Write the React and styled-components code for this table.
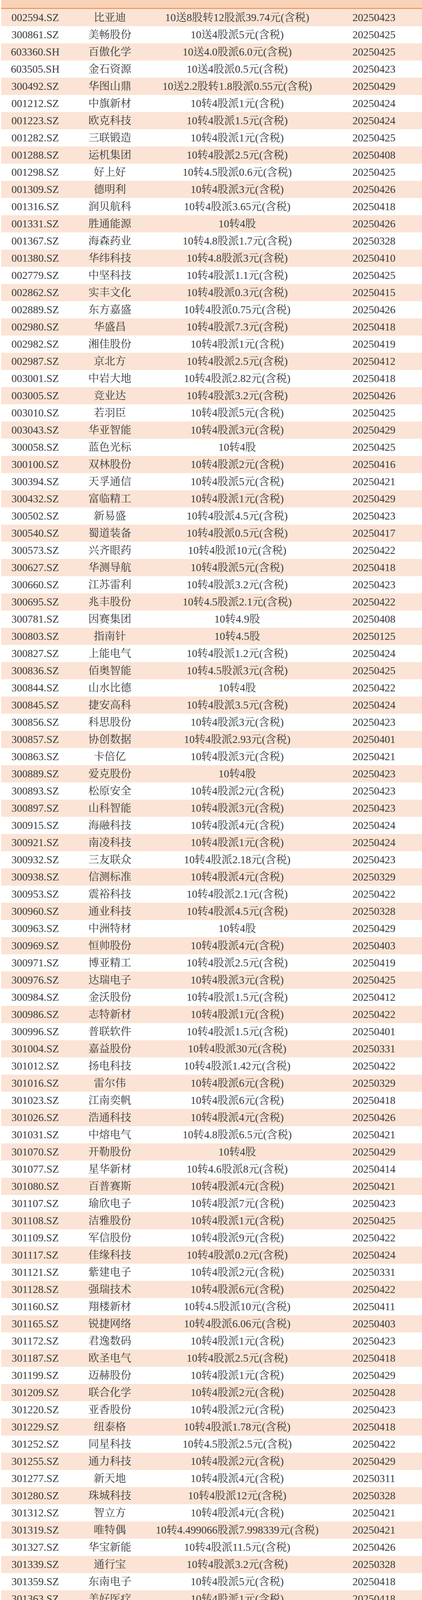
import React from 'react';
import styled, { createGlobalStyle } from 'styled-components';

const GlobalStyle = createGlobalStyle`
  html, body {
    margin: 0;
    padding: 0;
    background: #ffffff;
  }
  body {
    font-family: "Liberation Serif", "Noto Serif CJK SC", "Noto Sans CJK SC", serif;
    color: #3a3a3a;
  }
`;

// code|name|plan|date
const ROWS = `002594.SZ|比亚迪|10送8股转12股派39.74元(含税)|20250423
300861.SZ|美畅股份|10送4股派5元(含税)|20250425
603360.SH|百傲化学|10送4.0股派6.0元(含税)|20250425
603505.SH|金石资源|10送4股派0.5元(含税)|20250423
300492.SZ|华图山鼎|10送2.2股转1.8股派0.55元(含税)|20250429
001212.SZ|中旗新材|10转4股派1元(含税)|20250424
001223.SZ|欧克科技|10转4股派1.5元(含税)|20250424
001282.SZ|三联锻造|10转4股派1元(含税)|20250425
001288.SZ|运机集团|10转4股派2.5元(含税)|20250408
001298.SZ|好上好|10转4.5股派0.6元(含税)|20250425
001309.SZ|德明利|10转4股派3元(含税)|20250426
001316.SZ|润贝航科|10转4股派3.65元(含税)|20250418
001331.SZ|胜通能源|10转4股|20250426
001367.SZ|海森药业|10转4.8股派1.7元(含税)|20250328
001380.SZ|华纬科技|10转4.8股派3元(含税)|20250410
002779.SZ|中坚科技|10转4股派1.1元(含税)|20250425
002862.SZ|实丰文化|10转4股派0.3元(含税)|20250415
002889.SZ|东方嘉盛|10转4股派0.75元(含税)|20250426
002980.SZ|华盛昌|10转4股派7.3元(含税)|20250418
002982.SZ|湘佳股份|10转4股派1元(含税)|20250419
002987.SZ|京北方|10转4股派2.5元(含税)|20250412
003001.SZ|中岩大地|10转4股派2.82元(含税)|20250418
003005.SZ|竞业达|10转4股派3.2元(含税)|20250426
003010.SZ|若羽臣|10转4股派5元(含税)|20250425
003043.SZ|华亚智能|10转4股派3元(含税)|20250429
300058.SZ|蓝色光标|10转4股|20250425
300100.SZ|双林股份|10转4股派2元(含税)|20250416
300394.SZ|天孚通信|10转4股派5元(含税)|20250421
300432.SZ|富临精工|10转4股派1元(含税)|20250429
300502.SZ|新易盛|10转4股派4.5元(含税)|20250423
300540.SZ|蜀道装备|10转4股派0.5元(含税)|20250417
300573.SZ|兴齐眼药|10转4股派10元(含税)|20250422
300627.SZ|华测导航|10转4股派5元(含税)|20250418
300660.SZ|江苏雷利|10转4股派3.2元(含税)|20250423
300695.SZ|兆丰股份|10转4.5股派2.1元(含税)|20250422
300781.SZ|因赛集团|10转4.9股|20250408
300803.SZ|指南针|10转4.5股|20250125
300827.SZ|上能电气|10转4股派1.2元(含税)|20250424
300836.SZ|佰奥智能|10转4.5股派3元(含税)|20250425
300844.SZ|山水比德|10转4股|20250422
300845.SZ|捷安高科|10转4股派3.5元(含税)|20250424
300856.SZ|科思股份|10转4股派3元(含税)|20250423
300857.SZ|协创数据|10转4股派2.93元(含税)|20250401
300863.SZ|卡倍亿|10转4股派3元(含税)|20250421
300889.SZ|爱克股份|10转4股|20250423
300893.SZ|松原安全|10转4股派2元(含税)|20250423
300897.SZ|山科智能|10转4股派3元(含税)|20250423
300915.SZ|海融科技|10转4股派4元(含税)|20250424
300921.SZ|南凌科技|10转4股派1元(含税)|20250424
300932.SZ|三友联众|10转4股派2.18元(含税)|20250423
300938.SZ|信测标准|10转4股派4元(含税)|20250329
300953.SZ|震裕科技|10转4股派2.1元(含税)|20250422
300960.SZ|通业科技|10转4股派4.5元(含税)|20250328
300963.SZ|中洲特材|10转4股|20250429
300969.SZ|恒帅股份|10转4股派4元(含税)|20250403
300971.SZ|博亚精工|10转4股派2.5元(含税)|20250419
300976.SZ|达瑞电子|10转4股派3元(含税)|20250425
300984.SZ|金沃股份|10转4股派1.5元(含税)|20250412
300986.SZ|志特新材|10转4股派1元(含税)|20250422
300996.SZ|普联软件|10转4股派1.5元(含税)|20250401
301004.SZ|嘉益股份|10转4股派30元(含税)|20250331
301012.SZ|扬电科技|10转4股派1.42元(含税)|20250422
301016.SZ|雷尔伟|10转4股派6元(含税)|20250329
301023.SZ|江南奕帆|10转4股派6元(含税)|20250418
301026.SZ|浩通科技|10转4股派4元(含税)|20250426
301031.SZ|中熔电气|10转4.8股派6.5元(含税)|20250421
301070.SZ|开勒股份|10转4股|20250429
301077.SZ|星华新材|10转4.6股派8元(含税)|20250414
301080.SZ|百普赛斯|10转4股派4元(含税)|20250421
301107.SZ|瑜欣电子|10转4股派7元(含税)|20250423
301108.SZ|洁雅股份|10转4股派1元(含税)|20250425
301109.SZ|军信股份|10转4股派9元(含税)|20250422
301117.SZ|佳缘科技|10转4股派0.2元(含税)|20250424
301121.SZ|紫建电子|10转4股派2元(含税)|20250331
301128.SZ|强瑞技术|10转4股派6元(含税)|20250422
301160.SZ|翔楼新材|10转4.5股派10元(含税)|20250411
301165.SZ|锐捷网络|10转4股派6.06元(含税)|20250403
301172.SZ|君逸数码|10转4股派1元(含税)|20250423
301187.SZ|欧圣电气|10转4股派2.5元(含税)|20250418
301199.SZ|迈赫股份|10转4股派1元(含税)|20250429
301209.SZ|联合化学|10转4股派2元(含税)|20250428
301220.SZ|亚香股份|10转4股派2元(含税)|20250423
301229.SZ|纽泰格|10转4股派1.78元(含税)|20250418
301252.SZ|同星科技|10转4.5股派2.5元(含税)|20250422
301255.SZ|通力科技|10转4股派2元(含税)|20250429
301277.SZ|新天地|10转4股派4元(含税)|20250311
301280.SZ|珠城科技|10转4股派12元(含税)|20250328
301312.SZ|智立方|10转4股派4元(含税)|20250421
301319.SZ|唯特偶|10转4.499066股派7.998339元(含税)|20250421
301327.SZ|华宝新能|10转4股派11.5元(含税)|20250426
301339.SZ|通行宝|10转4股派3.2元(含税)|20250328
301359.SZ|东南电子|10转4股派5元(含税)|20250418
301363.SZ|美好医疗|10转4股派1元(含税)|20250418
301366.SZ|一博科技|10转4股派4元(含税)|20250428
301379.SZ|天山电子|10转4股派4元(含税)|20250422
301380.SZ|挖金客|10转4.5股派3.5元(含税)|20250428
301396.SZ|宏景科技|10转4股派0.5元(含税)|20250424
301398.SZ|星源卓镁|10转4股派3.75元(含税)|20250403
301399.SZ|英特科技|10转4.5股派3.00元(含税)|20250429
301479.SZ|弘景光电|10转4股派15元(含税)|20250428
301489.SZ|思泉新材|10转4股派2.5元(含税)|20250416
301500.SZ|飞南资源|10转4股派1.3元(含税)|20250412
301501.SZ|恒鑫生活|10转4.5股派5元(含税)|20250425
301517.SZ|陕西华达|10转4股派0.56元(含税)|20250429
301538.SZ|骏鼎达|10转4股派6元(含税)|20250422
301550.SZ|斯菱股份|10转4.5股派4元(含税)|20250424
301552.SZ|科力装备|10转4股派10元(含税)|20250424
301580.SZ|爱迪特|10转4股派6.5元(含税)|20250429
301596.SZ|瑞迪智驱|10转4股派5.6元(含税)|20250419
301600.SZ|慧翰股份|10转4.9股派25元(含税)|20250421
301607.SZ|富特科技|10转4股派0.18元(含税)|20250424
301613.SZ|新铝时代|10转5股派10元(含税)|20250415
301618.SZ|长联科技|10转4股派3.3元(含税)|20250429
301631.SZ|壹连科技|10转4股派12元(含税)|20250419
600885.SH|宏发股份|10转4.0股派5.150元(含税)|20250329
603037.SH|凯众股份|10转4.0股派3.50元(含税)|20250429
603050.SH|科林电气|10转4.8股派2元(含税)|20250225
603051.SH|鹿山新材|10转4股派4元(含税)|20250428
603052.SH|可川科技|10转4股派2.5元(含税)|20250430
603067.SH|振华股份|10转4股派1.9元(含税)|20250428
603095.SH|越剑智能|10转4股派8元(含税)|20250412
603125.SH|常青科技|10转4.50股派1.50元(含税)|20250412
603195.SH|公牛集团|10转4.0股派24.0元(含税)|20250425
603269.SH|海鸥股份|10转4股派3元(含税)|20250429
603277.SH|银都股份|10转4.50股派5.0元(含税)|20250429
603283.SH|赛腾股份|10转4股派5.6元(含税)|20250430
603319.SH|美湖股份|10转4股派2.1元(含税)|20250426
603499.SH|翔港科技|10转4股派2.0元(含税)|20250426
603535.SH|嘉诚国际|10转4.8股派0.9元(含税)|20250220
603737.SH|三棵树|10转4股派3.2元(含税)|20250426
603871.SH|嘉友国际|10转4股派4元(含税)|20250425
605009.SH|豪悦护理|10转4股派8.5元(含税)|20250415
605117.SH|德业股份|10转4.0股派26.0元(含税)|20250430
605128.SH|上海沿浦|10转4.9股派3.88元(含税)|20250328
605369.SH|拱东医疗|10转4股派4元(含税)|20250422
605378.SH|野马电池|10转4股派5元(含税)|20250428
605488.SH|福莱新材|10转4股派1.5元(含税)|20250329
688018.SH|乐鑫科技|10转4股派6元(含税)|20250322
688059.SH|华锐精密|10转4股派6元(含税)|20250429
688076.SH|诺泰生物|10转4股派8元(含税)|20250423
688083.SH|中望软件|10转4股派5元(含税)|20250422
688096.SH|京源环保|10转4股派1.5元(含税)|20250426
688117.SH|圣诺生物|10转4股派1.4元(含税)|20250425
688120.SH|华海清科|10转4.9股派5.5元(含税)|20250429
688157.SH|松井股份|10转4股派2.33元(含税)|20250429
688169.SH|石头科技|10转4股派10.70元(含税)|20250404
688188.SH|柏楚电子|10转4股派21.6元(含税)|20250403
688191.SH|智洋创新|10转4.9股派5元(含税)|20250426
688208.SH|道通科技|10转4.9股派5元(含税)|20250329
688244.SH|永信至诚|10转4.8股派0.5元(含税)|20250429
688257.SH|新锐股份|10转4股派3元(含税)|20250418
688281.SH|华秦科技|10转4股派5.2元(含税)|20250425
688301.SH|奕瑞科技|10转4股派10元(含税)|20250426
688318.SH|财富趋势|10转4股派5元(含税)|20250329
688360.SH|德马科技|10转4股派1.5元(含税)|20250429
688399.SH|硕世生物|10转4.8股|20250419
688419.SH|耐科装备|10转4股派4元(含税)|20250412
688522.SH|纳睿雷达|10转4股派1元(含税)|20250419
688531.SH|日联科技|10转4.5股派6元(含税)|20250426
688556.SH|高测股份|10转4股派1.8元(含税)|20250429
688568.SH|中科星图|10转4.9股派1.30元(含税)|20250304
688577.SH|浙海德曼|10转4股派6元(含税)|20250425
688597.SH|煜邦电力|10转4股派1.53元(含税)|20250328
688603.SH|天承科技|10转4.9股派3元(含税)|20250410
688608.SH|恒玄科技|10转4股派12元(含税)|20250425
688611.SH|杭州柯林|10转4股派2元(含税)|20250403
688615.SH|合合信息|10转4股派20元(含税)|20250416
688617.SH|惠泰医疗|10转4.5股派17.5元(含税)|20250423
688625.SH|呈和科技|10转4股派2.5元(含税)|20250430
688636.SH|智明达|10转4.9股派1.42元(含税)|20250425
688682.SH|霍莱沃|10转4股派2元(含税)|20250411
688692.SH|达梦数据|10转4.9股|20250415
688697.SH|纽威数控|10转4股派6元(含税)|20250425
688766.SH|普冉股份|10转4股派4.3元(含税)|20250331
688767.SH|博拓生物|10转4股派10元(含税)|20250426
688788.SH|科思科技|10转4.9股|20250425`
  .split('\n')
  .map((line) => line.split('|'));

const Page = styled.div`
  position: relative;
  height: 7743px;
  overflow: hidden;
  padding-left: 3px;
  background: #ffffff;
`;

const HeaderBar = styled.div`
  height: 20px;
  background: #f9d3b7;
  border-bottom: 3px solid #ee9c67;
`;

const Table = styled.div`
  display: flex;
  flex-direction: column;
`;

const Row = styled.div`
  display: grid;
  grid-template-columns: 174px 208px 444px 1fr;
  align-items: center;
  height: 44px;
  flex-shrink: 0;
  background: ${(props) => (props.$alt ? '#fbe4d5' : '#ffffff')};
`;

const Cell = styled.div`
  text-align: center;
  font-size: 27.5px;
  line-height: 44px;
  white-space: nowrap;
  color: #3b3b3b;
  padding-left: ${(props) => (props.$last ? '5px' : '0')};
`;

const Watermark = styled.div`
  position: absolute;
  left: 886px;
  top: 7694px;
  display: flex;
  align-items: center;
  gap: 4px;
  color: rgba(120, 120, 120, 0.85);
  font-family: "Noto Sans CJK SC", "Noto Sans", sans-serif;
  font-size: 26px;
  line-height: 32px;
  text-shadow: 0 0 2px #ffffff, 0 0 2px #ffffff;
`;

const WeiboLogo = () => (
  <svg width="38" height="32" viewBox="0 0 38 32" fill="none">
    <path
      d="M15 9c-6 0-13 5-13 11 0 5 6 9 13 9 8 0 14-4 14-9 0-3-3-4-4-4 1-2 1-5-3-4l-3 1c1-3-1-5-4-4z"
      stroke="rgba(120,120,120,0.9)"
      strokeWidth="2.2"
      fill="rgba(255,255,255,0.6)"
      strokeLinejoin="round"
    />
    <ellipse cx="14" cy="21" rx="6" ry="4.5" stroke="rgba(120,120,120,0.9)" strokeWidth="2" />
    <circle cx="13" cy="21.5" r="1.6" fill="rgba(120,120,120,0.9)" />
    <path d="M27 4c4 0 7 3 7 7" stroke="rgba(120,120,120,0.9)" strokeWidth="2.2" strokeLinecap="round" />
    <path d="M27 8.5c1.6 0 3 1.2 3 3" stroke="rgba(120,120,120,0.9)" strokeWidth="2.2" strokeLinecap="round" />
  </svg>
);

const App = () => (
  <Page>
    <GlobalStyle />
    <HeaderBar />
    <Table>
      {ROWS.map(([code, name, plan, date], i) => (
        <Row key={code} $alt={i % 2 === 0}>
          <Cell>{code}</Cell>
          <Cell>{name}</Cell>
          <Cell>{plan}</Cell>
          <Cell $last>{date}</Cell>
        </Row>
      ))}
    </Table>
    <Watermark>
      <WeiboLogo />
      <span>@平凡论市</span>
    </Watermark>
  </Page>
);

export default App;
